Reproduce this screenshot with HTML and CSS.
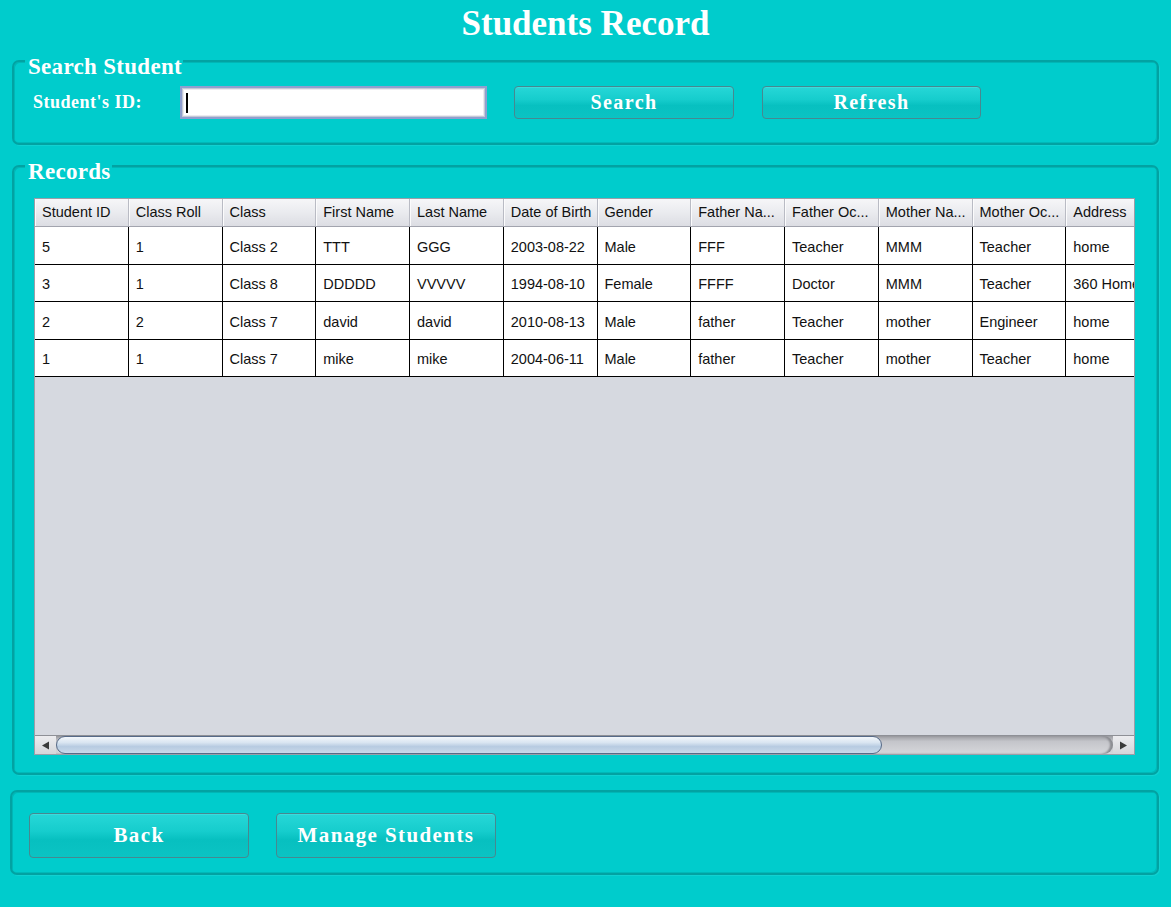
FILE: index.html
```html
<!DOCTYPE html>
<html lang="en">
<head>
<meta charset="utf-8">
<title>Students Record</title>
<link rel="stylesheet" href="styles.css">
</head>
<body>
  <h1 class="title">Students Record</h1>

  <section class="panel search-panel">
    <div class="legend">Search Student</div>
    <div class="search-row">
      <label class="field-label">Student's ID:</label>
      <div class="text-input"><span class="caret"></span></div>
      <button class="btn btn-search">Search</button>
      <button class="btn btn-refresh">Refresh</button>
    </div>
  </section>

  <section class="panel records-panel">
    <div class="legend">Records</div>
    <div class="table-frame">
      <div class="table-viewport">
        <div class="grid-row head">
          <div class="cell">Student ID</div>
          <div class="cell">Class Roll</div>
          <div class="cell">Class</div>
          <div class="cell">First Name</div>
          <div class="cell">Last Name</div>
          <div class="cell">Date of Birth</div>
          <div class="cell">Gender</div>
          <div class="cell">Father Na...</div>
          <div class="cell">Father Oc...</div>
          <div class="cell">Mother Na...</div>
          <div class="cell">Mother Oc...</div>
          <div class="cell">Address</div>
        </div>
        <div class="grid-row body-row">
          <div class="cell">5</div><div class="cell">1</div><div class="cell">Class 2</div><div class="cell">TTT</div><div class="cell">GGG</div><div class="cell">2003-08-22</div><div class="cell">Male</div><div class="cell">FFF</div><div class="cell">Teacher</div><div class="cell">MMM</div><div class="cell">Teacher</div><div class="cell">home</div>
        </div>
        <div class="grid-row body-row">
          <div class="cell">3</div><div class="cell">1</div><div class="cell">Class 8</div><div class="cell">DDDDD</div><div class="cell">VVVVV</div><div class="cell">1994-08-10</div><div class="cell">Female</div><div class="cell">FFFF</div><div class="cell">Doctor</div><div class="cell">MMM</div><div class="cell">Teacher</div><div class="cell">360 Home</div>
        </div>
        <div class="grid-row body-row">
          <div class="cell">2</div><div class="cell">2</div><div class="cell">Class 7</div><div class="cell">david</div><div class="cell">david</div><div class="cell">2010-08-13</div><div class="cell">Male</div><div class="cell">father</div><div class="cell">Teacher</div><div class="cell">mother</div><div class="cell">Engineer</div><div class="cell">home</div>
        </div>
        <div class="grid-row body-row">
          <div class="cell">1</div><div class="cell">1</div><div class="cell">Class 7</div><div class="cell">mike</div><div class="cell">mike</div><div class="cell">2004-06-11</div><div class="cell">Male</div><div class="cell">father</div><div class="cell">Teacher</div><div class="cell">mother</div><div class="cell">Teacher</div><div class="cell">home</div>
        </div>
      </div>
      <div class="hscroll">
        <div class="sb-btn sb-left"><svg width="9" height="9" viewBox="0 0 9 9"><path d="M1 4.5 L8 0.5 L8 8.5 Z" fill="#3a3a3a"/></svg></div>
        <div class="sb-track"><div class="sb-thumb"></div></div>
        <div class="sb-btn sb-right"><svg width="9" height="9" viewBox="0 0 9 9"><path d="M8 4.5 L1 0.5 L1 8.5 Z" fill="#3a3a3a"/></svg></div>
      </div>
    </div>
  </section>

  <section class="panel bottom-panel">
    <button class="btn btn-lg">Back</button>
    <button class="btn btn-lg">Manage Students</button>
  </section>
</body>
</html>
```

FILE: styles.css
```css
* { box-sizing: border-box; }

html, body {
  margin: 0;
  background: #00cccc;
}

body {
  padding: 0 12px;
  width: 1171px;
  height: 907px;
  overflow: hidden;
  font-family: "Liberation Serif", "Times New Roman", serif;
}

.title {
  margin: 0 0 12px;
  height: 48px;
  font-size: 35px;
  line-height: 48px;
  font-weight: bold;
  text-align: center;
  color: #ffffff;
}

.panel {
  border: 2px solid #02a2a2;
  border-radius: 7px;
  box-shadow: inset 1px 1px 0 #00b6b6, inset -1px -1px 0 #00b9b9, 1px 1px 0 #10d2d2;
}

.legend {
  width: fit-content;
  margin: -7px 0 0 11px;
  padding: 0 1px 0 3px;
  background: #00cccc;
  color: #ffffff;
  font-size: 23px;
  line-height: 23px;
  font-weight: bold;
  letter-spacing: 0.3px;
}

/* search panel */
.search-panel {
  padding: 0 0 24px 0;
}

.search-row {
  display: flex;
  align-items: center;
  margin-top: 8px;
  padding-left: 19px;
}

.field-label {
  width: 147px;
  color: #ffffff;
  font-size: 18px;
  font-weight: bold;
  letter-spacing: 0.5px;
}

.text-input {
  width: 307px;
  height: 33px;
  background: #ffffff;
  border: 2px solid #8f9fcf;
  box-shadow: inset 0 0 0 1px #c4c8d6, inset 0 0 0 2px #ebebf0;
  display: flex;
  align-items: center;
  padding-left: 4px;
}

.caret {
  width: 2px;
  height: 20px;
  background: #000000;
}

.btn {
  border: 1.5px solid #478890;
  border-radius: 4px;
  background: linear-gradient(#26d7d7 0%, #16cdcd 40%, #07c0c0 60%, #0bc3c3 100%);
  color: #ffffff;
  font-family: "Liberation Serif", "Times New Roman", serif;
  font-weight: bold;
  padding: 0;
  box-shadow: inset 0 1px 0 #3adcdc;
}

.btn-search, .btn-refresh {
  height: 33px;
  font-size: 20px;
  letter-spacing: 1.4px;
}

.btn-search { width: 220px; margin-left: 27px; }
.btn-refresh { width: 219px; margin-left: 28px; }

/* records panel */
.records-panel {
  margin-top: 20px;
  padding: 0 0 18px 0;
}

.table-frame {
  margin: 15px 0 0 20px;
  width: 1101px;
  height: 557px;
  border: 1px solid #9b9ea8;
  display: flex;
  flex-direction: column;
  background: #d6d9e0;
}

.table-viewport {
  flex: 1;
  overflow: hidden;
  background: #d6d9e0;
}

.grid-row {
  display: grid;
  grid-template-columns: repeat(11, 93.75px) 160px;
  width: max-content;
  font-family: "Liberation Sans", Arial, sans-serif;
  font-size: 14.5px;
  color: #111111;
}

.cell {
  padding-left: 7px;
  display: flex;
  align-items: center;
  white-space: nowrap;
  overflow: hidden;
}

.head {
  height: 28px;
  background: linear-gradient(#f6f6f8 0%, #eaebef 50%, #dcdde3 100%);
  border-bottom: 1px solid #a2a4ae;
}

.head .cell {
  border-right: 1px solid #b9bbc4;
  box-shadow: inset 1px 0 0 #fbfbfc;
  padding-bottom: 1px;
}

.body-row {
  height: 37.5px;
  background: #ffffff;
  border-bottom: 1px solid #000000;
}

.body-row .cell {
  border-right: 1px solid #000000;
  padding-top: 3px;
}

/* horizontal scrollbar */
.hscroll {
  height: 19px;
  display: flex;
  background: linear-gradient(#9d9ea3 0%, #c4c5ca 30%, #d6d7db 100%);
  border-top: 1px solid #8e9096;
}

.sb-btn {
  width: 21px;
  display: flex;
  align-items: center;
  justify-content: center;
  background: linear-gradient(#ececef, #d5d6da);
}

.sb-track {
  flex: 1;
  display: flex;
  border-radius: 0 9px 9px 0;
  box-shadow: inset -3px 0 2px #8c8d92;
}

.sb-thumb {
  width: 826px;
  height: 100%;
  margin-left: 0;
  border: 1px solid #566a88;
  border-radius: 9px;
  background: linear-gradient(#f3f7fb 0%, #d9e5f1 35%, #b7cbe1 60%, #c9d9ea 100%);
}

/* bottom panel */
.bottom-panel {
  margin: 15px 0 0 -2px;
  padding: 21px 0 15px 17px;
  display: flex;
  gap: 27px;
}

.btn-lg {
  width: 220px;
  height: 45px;
  font-size: 21px;
  letter-spacing: 1.4px;
}
```
